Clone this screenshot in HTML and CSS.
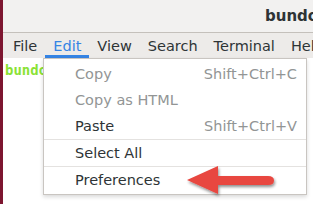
FILE: index.html
```html
<!DOCTYPE html>
<html>
<head>
<meta charset="utf-8">
<link rel="stylesheet" href="styles.css">
</head>
<body>
<div class="screen">
  <div class="strip"></div>
  <div class="window">
    <div class="titlebar"><span class="title">bundo</span></div>
    <div class="menubar">
      <span class="mitem">File</span>
      <span class="mitem active">Edit</span>
      <span class="mitem">View</span>
      <span class="mitem">Search</span>
      <span class="mitem">Terminal</span>
      <span class="mitem">Help</span>
    </div>
    <div class="term"><span class="prompt">bundo</span></div>
  </div>
  <div class="popup">
    <div class="pitem disabled"><span>Copy</span><span class="accel">Shift+Ctrl+C</span></div>
    <div class="pitem disabled"><span>Copy as HTML</span></div>
    <div class="pitem"><span>Paste</span><span class="accel">Shift+Ctrl+V</span></div>
    <div class="sep"></div>
    <div class="pitem"><span>Select All</span></div>
    <div class="sep"></div>
    <div class="pitem"><span>Preferences</span></div>
  </div>
  <svg class="arrow" width="100" height="40" viewBox="0 0 100 40">
    <defs>
      <filter id="sh" x="-20%" y="-30%" width="140%" height="170%">
        <feGaussianBlur in="SourceAlpha" stdDeviation="1.5"/>
        <feOffset dx="1" dy="2" result="b"/>
        <feComponentTransfer><feFuncA type="linear" slope="0.45"/></feComponentTransfer>
        <feMerge><feMergeNode/><feMergeNode in="SourceGraphic"/></feMerge>
      </filter>
    </defs>
    <path filter="url(#sh)" fill="#e8463f" d="M2 15 L33 1 L33 11 L83 11 Q89 11 89 15.5 Q89 20 83 20 L33 20 L33 29 Z"/>
  </svg>
</div>
</body>
</html>
```
FILE: styles.css
```css
html, body {
  margin: 0;
  padding: 0;
}
body {
  width: 313px;
  height: 204px;
  overflow: hidden;
  background: #ffffff;
  font-family: "DejaVu Sans", sans-serif;
}
.screen {
  position: relative;
  display: flex;
  width: 313px;
  height: 204px;
}
.strip {
  width: 3px;
  flex: none;
  background: #7d1630;
}
.window {
  flex: 1;
  display: flex;
  flex-direction: column;
  min-width: 0;
}
.titlebar {
  height: 32px;
  flex: none;
  background: #f2f1f0;
  display: flex;
  align-items: center;
  padding-left: 262px;
  white-space: nowrap;
  overflow: hidden;
}
.title {
  font-weight: bold;
  font-size: 15px;
  color: #2e3436;
}
.menubar {
  height: 25px;
  flex: none;
  border-top: 1px solid #c4c0bb;
  background: #edebe9;
  display: flex;
  align-items: stretch;
  padding-left: 2px;
  white-space: nowrap;
  overflow: hidden;
  font-size: 14.5px;
  color: #2e3436;
}
.mitem {
  padding: 0 8px;
  display: flex;
  align-items: center;
  border-bottom: 3px solid transparent;
  padding-top: 3px;
}
.mitem:first-child {
  padding-left: 8px;
}
.mitem.active {
  color: #3584e4;
  border-bottom-color: #3584e4;
}
.term {
  flex: 1;
  background: #ffffff;
  padding: 2px 0 0 2px;
}
.prompt {
  font-family: "DejaVu Sans Mono", monospace;
  font-weight: bold;
  font-size: 14px;
  color: #8ae234;
}
.popup {
  position: absolute;
  left: 43px;
  top: 58px;
  width: 262px;
  background: #ffffff;
  border: 1px solid #c9c5c1;
  box-shadow: 0 2px 4px rgba(0,0,0,0.15);
  padding: 2px 0 1px 0;
  font-size: 14.5px;
  color: #2e3436;
}
.pitem {
  height: 26px;
  display: flex;
  align-items: center;
  justify-content: space-between;
  padding: 0 9px 0 31px;
  white-space: nowrap;
}
.pitem.disabled {
  color: #929595;
}
.accel {
  color: #929595;
}
.sep {
  height: 1px;
  background: #e4e2e0;
}
.arrow {
  position: absolute;
  left: 185px;
  top: 165px;
}
```
